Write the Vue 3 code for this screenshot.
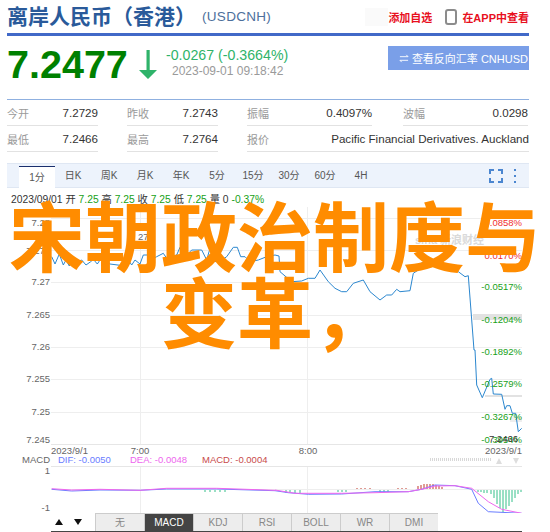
<script setup>
const stats = [
  [
    { label: '今开', value: '7.2729' },
    { label: '昨收', value: '7.2743' },
    { label: '振幅', value: '0.4097%' },
    { label: '波幅', value: '0.0298' }
  ],
  [
    { label: '最低', value: '7.2466' },
    { label: '最高', value: '7.2764' },
    { label: '报价', value: 'Pacific Financial Derivatives. Auckland', wide: true }
  ]
]

const tabs = ['1分', '日K', '周K', '月K', '年K', '5分', '15分', '30分', '60分', '4H']
const indicators = ['无', 'MACD', 'KDJ', 'RSI', 'BOLL', 'WR', 'DMI']

const leftLabels = [
  { t: '7.28', y: 226 }, { t: '7.275', y: 254 }, { t: '7.27', y: 285 }, { t: '7.265', y: 318 },
  { t: '7.26', y: 350 }, { t: '7.255', y: 382 }, { t: '7.25', y: 415 }, { t: '7.245', y: 443 }
]
const rightLabels = [
  { t: '0.0858%', y: 226, c: '#f03030' }, { t: '0.0170%', y: 259, c: '#f03030' },
  { t: '-0.0517%', y: 290, c: '#17a117' }, { t: '-0.1204%', y: 323, c: '#17a117' },
  { t: '-0.1892%', y: 355, c: '#17a117' }, { t: '-0.2579%', y: 387, c: '#17a117' },
  { t: '-0.3267%', y: 420, c: '#17a117' }, { t: '-0.3954%', y: 443, c: '#17a117' }
]
const gridY = [218, 250, 282, 315, 347, 379, 412]

const toPts = (arr, ox, oy) => arr.map(([x, y]) => `${(x / 3 + ox).toFixed(1)},${(y / 3 + oy).toFixed(1)}`).join(' ')

const line = [
  toPts([[155, 290], [165, 312], [178, 282], [190, 315], [198, 300], [208, 318], [218, 300], [232, 305], [245, 300], [258, 315], [272, 305], [280, 298], [292, 312], [300, 300], [330, 312], [360, 316], [375, 300], [385, 300], [395, 315], [405, 300], [420, 312], [430, 285], [445, 285], [455, 298], [470, 290], [490, 280], [500, 295], [530, 285], [540, 262], [560, 285], [575, 270], [605, 270], [620, 300], [630, 265], [645, 305], [665, 300], [680, 290], [700, 262], [712, 262], [722, 290], [735, 290], [750, 305], [775, 300], [800, 290]], 0, 160),
  toPts([[0, 285], [12, 288], [15, 335], [50, 365], [80, 363], [100, 355], [120, 355], [135, 330], [160, 365], [180, 385], [200, 395], [215, 395], [235, 370], [265, 360], [285, 395], [315, 420], [335, 405], [350, 405], [365, 388], [375, 395], [405, 392], [415, 340], [430, 330], [440, 308], [470, 305], [500, 320], [550, 335], [570, 350], [580, 347], [597, 570]], 275, 160),
  toPts([[600, 0], [605, 105], [622, 143], [645, 88], [650, 85], [655, 132], [680, 133], [690, 178], [695, 167], [705, 167], [712, 190], [722, 190], [730, 245], [740, 235]], 275, 350)
].join(' ')

const dif = toPts([[155, 418], [215, 423], [300, 420], [420, 421], [500, 417], [650, 417], [825, 422]], 0, 350) + ' ' +
  toPts([[0, 422], [40, 428], [100, 433], [200, 432], [300, 425], [400, 425], [440, 418], [480, 405], [540, 407], [590, 418], [610, 460], [640, 485], [740, 490]], 275, 350)
const dea = toPts([[155, 416], [215, 420], [300, 418], [420, 421], [500, 415], [650, 415], [825, 421]], 0, 350) + ' ' +
  toPts([[0, 420], [60, 430], [200, 430], [300, 428], [400, 425], [440, 418], [480, 408], [540, 407], [590, 415], [640, 455], [680, 478], [740, 490]], 275, 350)

const greenBars = [
  [478, 2], [481, 2], [484, 3], [487, 3], [491, 4], [494, 8], [497, 14], [500, 18], [503, 22],
  [506, 19], [509, 16], [512, 12], [515, 8], [518, 4], [521, 2], [286, 3], [290, 3], [295, 3], [300, 3],
  [338, 2], [342, 2], [346, 2], [380, 2], [384, 2], [388, 2], [205, 2], [210, 2], [215, 2], [220, 2], [225, 2]
]
const redBars = [
  [418, 3], [421, 4], [424, 5], [427, 5], [430, 5], [433, 5], [436, 4], [439, 3], [442, 2],
  [357, 1], [361, 1], [365, 1], [370, 1], [398, 1], [402, 1], [406, 1]
]
</script>

<template>
  <div class="page">
    <header class="head">
      <h1 class="title">离岸人民币（香港）</h1>
      <span class="code">(USDCNH)</span>
      <div class="head-right">
        <span class="patch"></span>
        <span class="red">添加自选</span>
        <svg class="phone" width="12" height="16" viewBox="0 0 12 16">
          <rect x="1" y="1" width="10" height="14" rx="2" fill="#fff" stroke="#8c8c8c" stroke-width="2" />
        </svg>
        <span class="red">在APP中查看</span>
      </div>
    </header>

    <section class="quote">
      <div class="price">7.2477</div>
      <svg class="arrow" width="20" height="30" viewBox="0 0 20 30">
        <path d="M8.5 0h3.2v20H19L10 29 1 20h7.5z" fill="#2fb36a" />
      </svg>
      <div class="change">
        <div class="delta">-0.0267 (-0.3664%)</div>
        <div class="time">2023-09-01 09:18:42</div>
      </div>
      <button class="reverse">
        <svg width="10" height="11" viewBox="0 0 11 11">
          <path d="M1 3.5h9L8 1.5M10 7.5H1l2 2" fill="none" stroke="#fff" stroke-width="1" />
        </svg>
        <span>查看反向汇率 CNHUSD</span>
      </button>
    </section>

    <section class="stats">
      <div v-for="(row, i) in stats" :key="i" class="stat-row">
        <div v-for="cell in row" :key="cell.label" class="stat" :class="{ wide: cell.wide }">
          <span class="stat-label">{{ cell.label }}</span>
          <span class="stat-value">{{ cell.value }}</span>
        </div>
      </div>
    </section>

    <nav class="tabs">
      <span v-for="(tab, i) in tabs" :key="tab" class="tab" :class="{ active: i === 0 }">{{ tab }}</span>
      <span class="tools">
        <svg width="14" height="14" viewBox="0 0 14 14">
          <path d="M1 5V1h4M9 1h4v4M13 9v4H9M5 13H1V9" fill="none" stroke="#4b86d0" stroke-width="2" />
        </svg>
        <svg width="4" height="14" viewBox="0 0 4 14">
          <rect x="1" y="0" width="2" height="2" fill="#4b86d0" />
          <rect x="1" y="6" width="2" height="2" fill="#4b86d0" />
          <rect x="1" y="12" width="2" height="2" fill="#4b86d0" />
        </svg>
      </span>
    </nav>

    <div class="info">
      2023/09/01 开 <b>7.25</b> 高 <b>7.25</b> 收 <b>7.25</b> 低 <b>7.25</b> 量 0 <b>-0.37%</b>
    </div>

    <svg class="chart" width="530" height="306" viewBox="0 207 530 306">
      <g stroke="#eeeeee" stroke-width="1">
        <line v-for="y in gridY" :key="y" x1="51" x2="522" :y1="y + 0.5" :y2="y + 0.5" />
        <line x1="140.5" x2="140.5" y1="207" y2="444" />
        <line x1="307.5" x2="307.5" y1="207" y2="444" />
        <line x1="140.5" x2="140.5" y1="467" y2="513" />
        <line x1="307.5" x2="307.5" y1="467" y2="513" />
        <line x1="51" x2="522" y1="444.5" y2="444.5" stroke="#e6e6e6" />
        <line x1="51" x2="522" y1="466.5" y2="466.5" stroke="#e6e6e6" />
        <line x1="51" x2="522" y1="489.5" y2="489.5" />
      </g>

      <rect x="473" y="314" width="49" height="6" fill="#e2e2e2" />
      <rect x="485" y="395" width="37" height="2" fill="#e2e2e2" />
      <rect x="510" y="417" width="12" height="5" fill="#eeeeee" />

      <text x="415" y="244" class="mark">sina 新浪财经</text>
      <rect x="137" y="231" width="14" height="11" fill="#fff" />
      <text x="138" y="240" class="lab">27</text>

      <g class="lab" text-anchor="end">
        <text v-for="l in leftLabels" :key="l.t" x="50" :y="l.y">{{ l.t }}</text>
      </g>

      <polyline :points="line" fill="none" stroke="#2b87cf" stroke-width="1" />

      <g text-anchor="end" class="lab">
        <text v-for="l in rightLabels" :key="l.t" x="522" :y="l.y" :fill="l.c">{{ l.t }}</text>
        <text x="518" y="442" fill="#333">7.2466</text>
      </g>

      <g class="lab">
        <text x="51" y="454">2023/9/1</text>
        <text x="140" y="454" text-anchor="middle">7:00</text>
        <text x="308" y="454" text-anchor="middle">8:00</text>
        <text x="522" y="454" text-anchor="end">2023/9/1</text>
        <text x="50" y="463" text-anchor="end">MACD</text>
        <text x="58" y="463" fill="#6a7dff">DIF: -0.0050</text>
        <text x="130" y="463" fill="#ee66ee">DEA: -0.0048</text>
        <text x="202" y="463" fill="#c84a4a">MACD: -0.0004</text>
        <text x="50" y="474" text-anchor="end">1</text>
        <text x="50" y="511" text-anchor="end">-1</text>
      </g>

      <line x1="430" x2="492" y1="459.5" y2="459.5" stroke="#d8d8d8" stroke-width="3" stroke-dasharray="1 1" />
      <path d="M496 464l3-6 3 6zM513 458h6l-3 6z" fill="#dddddd" />

      <g stroke-width="1">
        <line v-for="b in greenBars" :key="'g' + b[0]" :x1="b[0]" :x2="b[0]" y1="490" :y2="490 + b[1]" stroke="#35c08a" />
        <line v-for="b in redBars" :key="'r' + b[0]" :x1="b[0]" :x2="b[0]" y1="489" :y2="489 - b[1]" stroke="#c0392b" />
      </g>
      <polyline :points="dif" fill="none" stroke="#6a7dff" stroke-width="1" />
      <polyline :points="dea" fill="none" stroke="#ee66ee" stroke-width="1" />
    </svg>

    <div class="bottom">
      <span class="step"><i class="up"></i></span>
      <span class="step"><i class="down"></i></span>
      <div class="indicators">
        <span v-for="ind in indicators" :key="ind" class="ind" :class="{ on: ind === 'MACD' }">{{ ind }}</span>
      </div>
    </div>

    <div class="overlay">宋朝政治制度与变革，</div>
  </div>
</template>

<style scoped>
.page {
  position: relative;
  width: 550px;
  height: 532px;
  overflow: hidden;
  background: #fff;
  font-family: "Liberation Sans", "Noto Sans CJK SC", sans-serif;
  color: #333;
}

.head {
  display: flex;
  align-items: center;
  height: 33px;
  margin: 0 21px 0 7px;
  border-bottom: 3px solid #4169c8;
}
.title {
  margin: 0;
  font-size: 21px;
  line-height: 35px;
  font-weight: 700;
  color: #2a5a9a;
  white-space: nowrap;
  width: 195px;
}
.code {
  font-size: 13.5px;
  color: #4d6f9c;
  letter-spacing: 0.3px;
}
.head-right {
  display: flex;
  align-items: center;
  margin-left: auto;
  font-size: 11px;
  font-weight: 700;
}
.patch {
  width: 23px;
  height: 18px;
  background: #fafafa;
}
.red {
  color: #e8101e;
}
.phone {
  margin: 0 5px 0 13px;
}

.quote {
  display: flex;
  height: 63px;
  margin: 0 21px 0 7px;
  position: relative;
}
.price {
  font-size: 39.5px;
  font-weight: 700;
  color: #008000;
  line-height: 46px;
  margin-top: 5px;
  width: 131px;
}
.arrow {
  margin-top: 14px;
}
.change {
  margin: 11px 0 0 8px;
  font-size: 12px;
  line-height: 16px;
}
.delta {
  color: #2fb36a;
  font-size: 14.2px;
  white-space: nowrap;
}
.time {
  color: #9a9a9a;
  margin-left: 6px;
  white-space: nowrap;
}
.reverse {
  position: absolute;
  right: 0;
  top: 10px;
  display: flex;
  align-items: center;
  justify-content: flex-end;
  gap: 3px;
  width: 141px;
  height: 24px;
  padding: 0 1px 0 0;
  border: 0;
  background: #7a9fe8;
  color: #fff;
  font: 11px "Liberation Sans", "Noto Sans CJK SC", sans-serif;
  white-space: nowrap;
}

.stats {
  margin: 0 21px 0 7px;
  border-top: 1px solid #8fb0e0;
}
.stat-row {
  display: flex;
  height: 26px;
}
.stat {
  display: flex;
  justify-content: space-between;
  align-items: center;
  border-bottom: 1px solid #e2e2e2;
  font-size: 11px;
  width: 91px;
  margin-right: 29px;
}
.stat:nth-child(3) {
  width: 125px;
  margin-right: 31px;
}
.stat:nth-child(4) {
  width: 125px;
  margin-right: 0;
}
.stat.wide {
  flex: 1;
  width: auto;
  margin-right: 0;
}
.stat-label {
  color: #9a9a9a;
}
.stat-value {
  color: #333;
  font-size: 11.6px;
  white-space: nowrap;
}

.tabs {
  display: flex;
  height: 25px;
  margin: 11px 21px 0 7px;
  padding-left: 12px;
  background: #edf3fc;
  border-top: 1px solid #dfe7f3;
  border-bottom: 1px solid #dfe7f3;
  box-sizing: border-box;
  font-size: 10px;
  color: #555;
}
.tab {
  width: 36px;
  text-align: center;
  line-height: 24px;
}
.tab.active {
  margin-top: 2px;
  height: 22px;
  background: #fff;
  border-top: 1px solid #1a2f6d;
  box-sizing: border-box;
  line-height: 22px;
}
.tools {
  display: flex;
  align-items: center;
  gap: 10px;
  margin-left: auto;
  padding-right: 12px;
}

.info {
  height: 19px;
  margin-left: 11px;
  font-size: 10.3px;
  line-height: 23px;
  white-space: nowrap;
  color: #333;
}
.info b {
  font-weight: 400;
  color: #17a117;
}

.chart {
  display: block;
}
.lab {
  font-size: 9.5px;
  fill: #666;
}
.mark {
  font-size: 11px;
  font-weight: 700;
  fill: #d9d9d9;
}

.bottom {
  display: flex;
  height: 19px;
  margin: 0 28px 0 51px;
  border-bottom: 1px solid #444;
  box-sizing: border-box;
}
.step {
  display: flex;
  align-items: center;
  justify-content: center;
  width: 16px;
  margin-right: 3px;
}
.up {
  border: 4px solid transparent;
  border-top: 0;
  border-bottom: 6px solid #111;
}
.down {
  border: 4px solid transparent;
  border-bottom: 0;
  border-top: 6px solid #111;
}
.indicators {
  display: flex;
  margin-left: 6px;
}
.ind {
  width: 49px;
  text-align: center;
  font-size: 10px;
  line-height: 17px;
  color: #888;
  background: #ededed;
  border-top: 1px solid #ccc;
  border-left: 1px solid #ccc;
  box-sizing: border-box;
}
.ind.on {
  background: #444;
  color: #fff;
}

.overlay {
  position: absolute;
  left: 0;
  right: 0;
  top: 195px;
  text-align: center;
  font-size: 76px;
  line-height: 76px;
  font-weight: 700;
  color: #ff8c00;
  font-family: "Noto Sans CJK SC", sans-serif;
}
</style>
